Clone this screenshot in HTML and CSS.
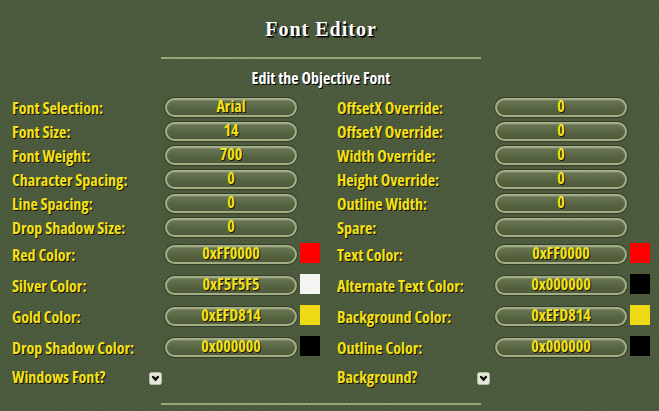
FILE: index.html
```html
<!DOCTYPE html>
<html>
<head>
<meta charset="utf-8">
<link rel="stylesheet" href="styles.css">
</head>
<body>
<div class="page">
  <h1 class="title">Font Editor</h1>
  <div class="rule"></div>
  <h2 class="subtitle">Edit the Objective Font</h2>
  <div class="grid">
    <span class="label">Font Selection:</span><span class="field">Arial</span><span></span><span></span>
    <span class="label">OffsetX Override:</span><span class="field">0</span><span></span>

    <span class="label">Font Size:</span><span class="field">14</span><span></span><span></span>
    <span class="label">OffsetY Override:</span><span class="field">0</span><span></span>

    <span class="label">Font Weight:</span><span class="field">700</span><span></span><span></span>
    <span class="label">Width Override:</span><span class="field">0</span><span></span>

    <span class="label">Character Spacing:</span><span class="field">0</span><span></span><span></span>
    <span class="label">Height Override:</span><span class="field">0</span><span></span>

    <span class="label">Line Spacing:</span><span class="field">0</span><span></span><span></span>
    <span class="label">Outline Width:</span><span class="field">0</span><span></span>

    <span class="label">Drop Shadow Size:</span><span class="field">0</span><span></span><span></span>
    <span class="label">Spare:</span><span class="field"></span><span></span>

    <span class="label">Red Color:</span><span class="field">0xFF0000</span><span class="swatch red"></span><span></span>
    <span class="label">Text Color:</span><span class="field">0xFF0000</span><span class="swatch red"></span>

    <span class="label">Silver Color:</span><span class="field">0xF5F5F5</span><span class="swatch silver"></span><span></span>
    <span class="label">Alternate Text Color:</span><span class="field">0x000000</span><span class="swatch black"></span>

    <span class="label">Gold Color:</span><span class="field">0xEFD814</span><span class="swatch gold"></span><span></span>
    <span class="label">Background Color:</span><span class="field">0xEFD814</span><span class="swatch gold"></span>

    <span class="label">Drop Shadow Color:</span><span class="field">0x000000</span><span class="swatch black"></span><span></span>
    <span class="label">Outline Color:</span><span class="field">0x000000</span><span class="swatch black"></span>

    <span class="label check-row">Windows Font?
      <svg class="check" width="13" height="13" viewBox="0 0 13 13"><rect x="0.5" y="0.5" width="12" height="12" rx="2" fill="#e6e8dc" stroke="#b4bb9e"/><path d="M2.8 5.2 Q3 3.6 4.6 3.9 L6.5 5.6 L8.4 3.9 Q10 3.6 10.2 5.2 L6.5 9.6 Z" fill="#111"/></svg>
    </span><span></span><span></span><span></span>
    <span class="label check-row right">Background?
      <svg class="check" width="13" height="13" viewBox="0 0 13 13"><rect x="0.5" y="0.5" width="12" height="12" rx="2" fill="#e6e8dc" stroke="#b4bb9e"/><path d="M2.8 5.2 Q3 3.6 4.6 3.9 L6.5 5.6 L8.4 3.9 Q10 3.6 10.2 5.2 L6.5 9.6 Z" fill="#111"/></svg>
    </span><span></span><span></span>
  </div>
  <div class="rule bottom"></div>
</div>
</body>
</html>
```
FILE: styles.css
```css
html, body {
  margin: 0;
  padding: 0;
  background: #4b593c;
}
body {
  width: 659px;
  height: 411px;
  overflow: hidden;
  background-color: #4b593c;
  background-image:
    repeating-linear-gradient(37deg, rgba(255,255,255,0.025) 0 1px, transparent 1px 3px),
    repeating-linear-gradient(-53deg, rgba(0,0,0,0.04) 0 1px, transparent 1px 4px);
}
.page {
  width: 642px;
  padding-top: 17px;
  display: flex;
  flex-direction: column;
  align-items: center;
}
.title {
  margin: 0;
  font-family: "Liberation Serif", "DejaVu Serif", serif;
  font-weight: bold;
  font-size: 20px;
  line-height: 24px;
  letter-spacing: 1px;
  color: #ffffff;
  text-shadow: 1px 1px 0 #000, 2px 2px 0 rgba(0,0,0,0.5);
}
.rule {
  width: 320px;
  height: 2px;
  margin-top: 16px;
  background: #9aa47a;
}
.rule.bottom {
  margin-top: 14px;
}
.subtitle {
  margin: 10px 0 0;
  font-family: "Open Sans", "DejaVu Sans Condensed", sans-serif;
  font-stretch: 75%;
  font-weight: 700;
  font-size: 16px;
  line-height: 18px;
  color: #ffffff;
  text-shadow: 1px 1px 0 #000;
}
.grid {
  align-self: stretch;
  margin-top: 8px;
  padding-left: 12px;
  display: grid;
  grid-template-columns: 153px 132px 23px 17px 158px 132px 23px;
  grid-template-rows: repeat(6, 24px) repeat(4, 31px) 26px;
  align-items: center;
}
.label {
  font-family: "Open Sans", "DejaVu Sans Condensed", sans-serif;
  font-stretch: 75%;
  font-weight: 700;
  font-size: 16px;
  line-height: 18px;
  color: #f2e21a;
  text-shadow: 1px 1px 0 #1c1000;
  white-space: nowrap;
  padding-top: 1px;
}
.check-row {
  display: flex;
  align-items: center;
  justify-content: space-between;
  padding-right: 3px;
}
.check-row.right {
  padding-right: 5px;
}
.check {
  display: block;
  margin-top: 3px;
}
.field {
  box-sizing: border-box;
  height: 19px;
  border: 2px solid #a3ad84;
  border-radius: 10px;
  background: linear-gradient(#6a7655, #56633f 60%, #4e5a3a);
  box-shadow: 0 0 0 1px #333d28, inset 0 1px 1px rgba(255,255,255,0.12);
  text-align: center;
  font-family: "Open Sans", "DejaVu Sans Condensed", sans-serif;
  font-stretch: 75%;
  font-weight: 700;
  font-size: 16px;
  line-height: 12px;
  color: #f2e21a;
  text-shadow: 1px 1px 0 #1c1000;
  white-space: nowrap;
  overflow: visible;
}
.swatch {
  justify-self: end;
  width: 20px;
  height: 20px;
  margin-top: -3px;
}
.red { background: #ff0000; }
.silver { background: #f4f4f2; }
.gold { background: #efd814; }
.black { background: #000000; }
```
